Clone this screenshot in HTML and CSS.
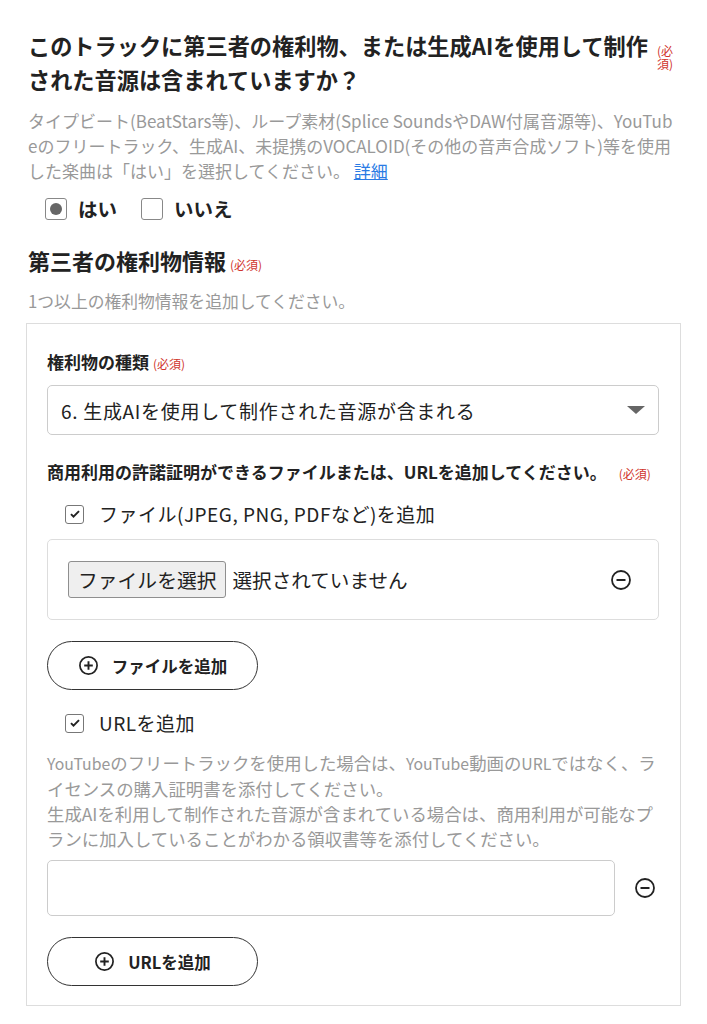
FILE: index.html
```html
<!DOCTYPE html>
<html lang="ja">
<head>
<meta charset="utf-8">
<link rel="stylesheet" href="styles.css">
</head>
<body>
<div class="page">
  <div class="q-head">
    <h2 class="q-title">このトラックに第三者の権利物、または生成AIを使用して制作された音源は含まれていますか？</h2>
    <span class="req req-stack">(必須)</span>
  </div>
  <p class="desc q-desc">タイプビート(BeatStars等)、ループ素材(Splice SoundsやDAW付属音源等)、YouTubeのフリートラック、生成AI、未提携のVOCALOID(その他の音声合成ソフト)等を使用した楽曲は「はい」を選択してください。 <a class="link" href="#">詳細</a></p>
  <div class="choices">
    <label class="choice"><span class="box"><span class="dot"></span></span><span class="choice-text">はい</span></label>
    <label class="choice"><span class="box"></span><span class="choice-text">いいえ</span></label>
  </div>

  <div class="sec-head">
    <h3 class="sec-title">第三者の権利物情報</h3><span class="req">(必須)</span>
  </div>
  <p class="desc sec-desc">1つ以上の権利物情報を追加してください。</p>

  <div class="card">
    <div class="label-row"><span class="label">権利物の種類</span><span class="req">(必須)</span></div>
    <div class="select">
      <span class="select-text">6. 生成AIを使用して制作された音源が含まれる</span>
      <span class="arrow"></span>
    </div>

    <div class="label-row label-row2"><span class="label">商用利用の許諾証明ができるファイルまたは、URLを追加してください。</span><span class="req">(必須)</span></div>

    <label class="check-row"><span class="cbox"><svg viewBox="0 0 18 18" width="16" height="16"><path d="M4.5 9.2l2.8 2.8L13.5 5.8" fill="none" stroke="#222" stroke-width="2.2"/></svg></span><span class="check-text">ファイル(JPEG, PNG, PDFなど)を追加</span></label>

    <div class="file-box">
      <span class="file-btn">ファイルを選択</span>
      <span class="file-none">選択されていません</span>
      <span class="minus"><svg viewBox="0 0 22 22" width="22" height="22"><circle cx="11" cy="11" r="9" fill="none" stroke="#222" stroke-width="1.8"/><path d="M6.5 11h9" stroke="#222" stroke-width="2"/></svg></span>
    </div>

    <button class="pill"><svg viewBox="0 0 22 22" width="21" height="21"><circle cx="11" cy="11" r="9" fill="none" stroke="#222" stroke-width="1.8"/><path d="M6.5 11h9M11 6.5v9" stroke="#222" stroke-width="2"/></svg><span>ファイルを追加</span></button>

    <label class="check-row check-url"><span class="cbox"><svg viewBox="0 0 18 18" width="16" height="16"><path d="M4.5 9.2l2.8 2.8L13.5 5.8" fill="none" stroke="#222" stroke-width="2.2"/></svg></span><span class="check-text">URLを追加</span></label>

    <p class="desc note"><span class="lat">YouTube</span>のフリートラックを使用した場合は、<span class="lat">YouTube</span>動画の<span class="lat">URL</span>ではなく、ライセンスの購入証明書を添付してください。<br>生成AIを利用して制作された音源が含まれている場合は、商用利用が可能なプランに加入していることがわかる領収書等を添付してください。</p>

    <div class="url-row">
      <span class="url-input"></span>
      <span class="minus minus-url"><svg viewBox="0 0 22 22" width="22" height="22"><circle cx="11" cy="11" r="9" fill="none" stroke="#222" stroke-width="1.8"/><path d="M6.5 11h9" stroke="#222" stroke-width="2"/></svg></span>
    </div>

    <button class="pill pill-url"><svg viewBox="0 0 22 22" width="21" height="21"><circle cx="11" cy="11" r="9" fill="none" stroke="#222" stroke-width="1.8"/><path d="M6.5 11h9M11 6.5v9" stroke="#222" stroke-width="2"/></svg><span>URLを追加</span></button>
  </div>
</div>
</body>
</html>
```

FILE: styles.css
```css
* { box-sizing: border-box; }
html, body { margin: 0; padding: 0; background: #fff; }
body {
  font-family: "Noto Sans CJK JP", "Noto Sans", sans-serif;
  color: #222;
}
.page { padding: 28px 26px 0 28px; }

.q-head { display: flex; align-items: flex-start; width: 655px; }
.q-title {
  margin: 0;
  width: 628px;
  flex: none;
  font-size: 22.2px;
  line-height: 34px;
  font-weight: 700;
}
.req { color: #d0342c; font-size: 12px; line-height: 13px; font-weight: 400; }
.req-stack { width: 22px; margin-left: 1px; margin-top: 16px; word-break: break-all; }

.desc {
  margin: 0;
  color: #999;
  font-size: 17px;
  line-height: 25px;
  line-break: anywhere;
  word-break: break-all;
}
.q-desc { margin-top: 12px; width: 653px; }
.link { color: #2a7be4; text-decoration: underline; }

.choices { display: flex; gap: 24px; margin: 14px 0 0 17px; align-items: center; }
.choice { display: flex; align-items: center; gap: 11px; }
.box {
  width: 22px; height: 22px;
  border: 1.5px solid #888;
  border-radius: 3px;
  display: flex; align-items: center; justify-content: center;
}
.dot { width: 12px; height: 12px; border-radius: 50%; background: #666; }
.choice-text { font-size: 19.5px; font-weight: 700; line-height: 24px; }

.sec-head { display: flex; align-items: baseline; margin-top: 24px; }
.sec-title { margin: 0; font-size: 22px; line-height: 30px; font-weight: 700; }
.sec-head .req { margin-left: 4px; }
.sec-desc { margin-top: 14px; font-size: 16.8px; }

.card {
  margin: 9px 0 0 -2px;
  width: 655px;
  border: 1px solid #ddd;
  padding: 26px 21px 19px 20px;
}
.label-row { display: flex; align-items: baseline; }
.label { font-size: 17px; font-weight: 700; line-height: 24px; }
.label-row .req { margin-left: 4px; }
.select {
  margin-top: 11px;
  height: 50px;
  border: 1px solid #ccc;
  border-radius: 5px;
  display: flex; align-items: center;
  padding: 0 13px 0 13px;
}
.select-text { flex: 1; font-size: 19px; letter-spacing: 0.7px; }
.arrow {
  width: 0; height: 0;
  border-left: 9px solid transparent;
  border-right: 9px solid transparent;
  border-top: 8px solid #666;
}
.label-row2 { margin-top: 25px; }
.label-row2 .req { margin-left: 12px; }

.check-row { display: flex; align-items: center; gap: 15px; margin: 18px 0 0 18px; height: 24px; }
.cbox {
  width: 19px; height: 19px;
  border: 1.5px solid #777;
  border-radius: 3px;
  display: flex; align-items: center; justify-content: center;
}
.check-text { font-size: 19px; line-height: 24px; letter-spacing: 0.5px; }

.file-box {
  margin-top: 13px;
  height: 81px;
  border: 1px solid #ddd;
  border-radius: 5px;
  display: flex; align-items: center;
  padding: 0 26px 0 20px;
}
.file-btn {
  background: #efefef;
  border: 1px solid #8f8f8f;
  border-radius: 3px;
  font-size: 19.8px;
  line-height: 35px;
  padding: 0 9px;
  margin-right: 6px;
}
.file-none { flex: 1; font-size: 19.6px; }
.minus { display: flex; }

.pill {
  margin-top: 21px;
  width: 211px; height: 49px;
  border: 1.2px solid #333;
  border-radius: 25px;
  background: #fff;
  display: flex; align-items: center; justify-content: center;
  gap: 13px;
  font-family: inherit;
  font-size: 16.5px;
  font-weight: 700;
  color: #222;
  padding: 0;
}
.check-url { margin-top: 21px; }
.note { margin-top: 15px; font-size: 17.4px; width: 618px; }
.lat { font-size: 15.8px; }
.url-row { display: flex; align-items: center; margin-top: 9px; }
.url-input {
  width: 568px; height: 56px;
  border: 1px solid #ccc;
  border-radius: 5px;
}
.minus-url { margin-left: 19px; }
.pill-url { margin-top: 21px; }
```
